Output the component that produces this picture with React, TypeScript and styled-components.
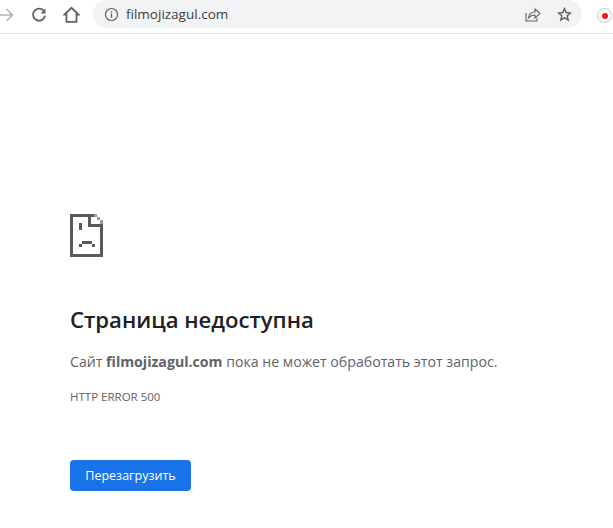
import React from "react";
import styled, { createGlobalStyle } from "styled-components";

const GlobalStyle = createGlobalStyle`
  html, body {
    margin: 0;
    padding: 0;
    background: #fff;
    overflow: hidden;
    font-family: "Open Sans", "Noto Sans", "Liberation Sans", sans-serif;
  }
`;

const Page = styled.div`
  width: 613px;
  height: 528px;
  overflow: hidden;
`;

const Toolbar = styled.div`
  height: 34px;
  box-sizing: border-box;
  border-bottom: 1px solid #e3e4e6;
  display: flex;
  align-items: flex-start;
  padding-top: 1px;
`;

const NavButton = styled.div<{ $width: number; $start?: number }>`
  width: ${(p) => p.$width}px;
  height: 27px;
  flex: none;
  box-sizing: border-box;
  display: flex;
  align-items: center;
  justify-content: ${(p) => (p.$start !== undefined ? "flex-start" : "center")};
  padding-left: ${(p) => p.$start ?? 0}px;
`;

const AddressBar = styled.div`
  width: 489px;
  height: 28px;
  flex: none;
  margin-top: -1px;
  box-sizing: border-box;
  background: #f1f3f4;
  border-radius: 14px;
  padding: 0 10px 0 11px;
  display: flex;
  align-items: center;
`;

const Url = styled.span`
  margin-left: 7px;
  font-size: 13.5px;
  color: #3c4043;
  flex: 1;
`;

const BarIcon = styled.div<{ $gap: number }>`
  display: flex;
  margin-left: ${(p) => p.$gap}px;
`;

const Record = styled.div`
  width: 15px;
  height: 15px;
  margin: 7px 0 0 15px;
  flex: none;
  box-sizing: border-box;
  border: 1px solid #c4c6c9;
  border-radius: 50%;
  display: flex;
  align-items: center;
  justify-content: center;
  &::after {
    content: "";
    width: 6px;
    height: 6px;
    border-radius: 50%;
    background: #f01f1f;
  }
`;

const Content = styled.main`
  padding: 180px 0 0 70px;
`;

const SadPage = styled.svg`
  display: block;
  width: 33px;
  height: 43px;
`;

const Title = styled.h1`
  margin: 47px 0 0;
  font-size: 22.1px;
  line-height: 30px;
  font-weight: 600;
  color: #202124;
`;

const Message = styled.p`
  margin: 17px 0 0;
  font-size: 14.15px;
  line-height: 22px;
  color: #5f6368;
  b {
    font-weight: 700;
  }
`;

const ErrorCode = styled.div`
  margin-top: 16px;
  font-size: 11.5px;
  line-height: 16px;
  color: #5f6368;
`;

const ReloadButton = styled.button`
  display: block;
  margin-top: 55px;
  width: 121px;
  height: 31px;
  padding: 0;
  border: none;
  border-radius: 4px;
  background: #1a73e8;
  color: #fff;
  font-family: inherit;
  font-size: 12.5px;
  font-weight: 500;
`;

export default function App() {
  return (
    <Page>
      <GlobalStyle />
      <Toolbar>
        <NavButton $width={26} $start={0}>
          <svg width="14" height="14" viewBox="0 0 14 14" fill="none" stroke="#b0b3b6" strokeWidth="1.6">
            <path d="M-2 7H12.500M6.500 1l6 6-6 6" />
          </svg>
        </NavButton>
        <NavButton $width={26}>
          <svg width="16" height="16" viewBox="0 0 16 16" fill="none">
            <path d="M13 4.200A6 6 0 1 0 14 8.600" stroke="#5f6368" strokeWidth="1.9" />
            <path d="M14.500 1.500V6.500H9.500Z" fill="#5f6368" />
          </svg>
        </NavButton>
        <NavButton $width={41} $start={11}>
          <svg width="17" height="17" viewBox="0 0 17 17" fill="none" stroke="#5f6368" strokeWidth="1.8">
            <path d="M3.500 15.800V8.500H1.500L8.500 1.800l7 6.700h-2v7.300Z" />
          </svg>
        </NavButton>
        <AddressBar>
          <svg width="15" height="15" viewBox="0 0 15 15" fill="none" stroke="#5f6368">
            <circle cx="7.500" cy="7.500" r="6" strokeWidth="1.2" />
            <path d="M7.500 6.600v4.200M7.500 4.200v1.300" strokeWidth="1.3" />
          </svg>
          <Url>filmojizagul.com</Url>
          <BarIcon $gap={0}>
            <svg width="16" height="15" viewBox="0 0 16 15" fill="none" stroke="#5f6368" strokeWidth="1.1">
              <path d="M1 6v8h11v-3" />
              <path d="M3.500 11C4 7.500 6.500 5 10 5V2l5 4.500-5 4.500V8c-2.700 0-4.800.8-6.500 3Z" />
            </svg>
          </BarIcon>
          <BarIcon $gap={16}>
            <svg width="15" height="15" viewBox="0 0 15 15" fill="none" stroke="#5f6368" strokeWidth="1.5">
              <path d="M7.500 1.700 9.200 5.600l4.200.4-3.200 2.800.95 4.100-3.650-2.150-3.650 2.150.95-4.100L1.600 6l4.200-.4Z" />
            </svg>
          </BarIcon>
        </AddressBar>
        <Record />
      </Toolbar>
      <Content>
        <SadPage viewBox="0 0 33 43" shapeRendering="crispEdges" fill="#5a5a5c">
          <path d="M0 0H24V3H3V40H30V13H33V43H0Z" fill="#5a5a5c" />
          <path d="M18 3H21V10H33V13H18Z" />
          <path d="M24 0H27V3H24ZM27 3H30V6H27ZM30 6H33V10H30Z" fill="#9a9a9c" />
          <path d="M9 9H12V16H9ZM12 27H22V30H12ZM9 30H12V33H9ZM22 30H25V33H22Z" />
        </SadPage>
        <Title>Страница недоступна</Title>
        <Message>
          Сайт <b>filmojizagul.com</b> пока не может обработать этот запрос.
        </Message>
        <ErrorCode>HTTP ERROR 500</ErrorCode>
        <ReloadButton>Перезагрузить</ReloadButton>
      </Content>
    </Page>
  );
}
